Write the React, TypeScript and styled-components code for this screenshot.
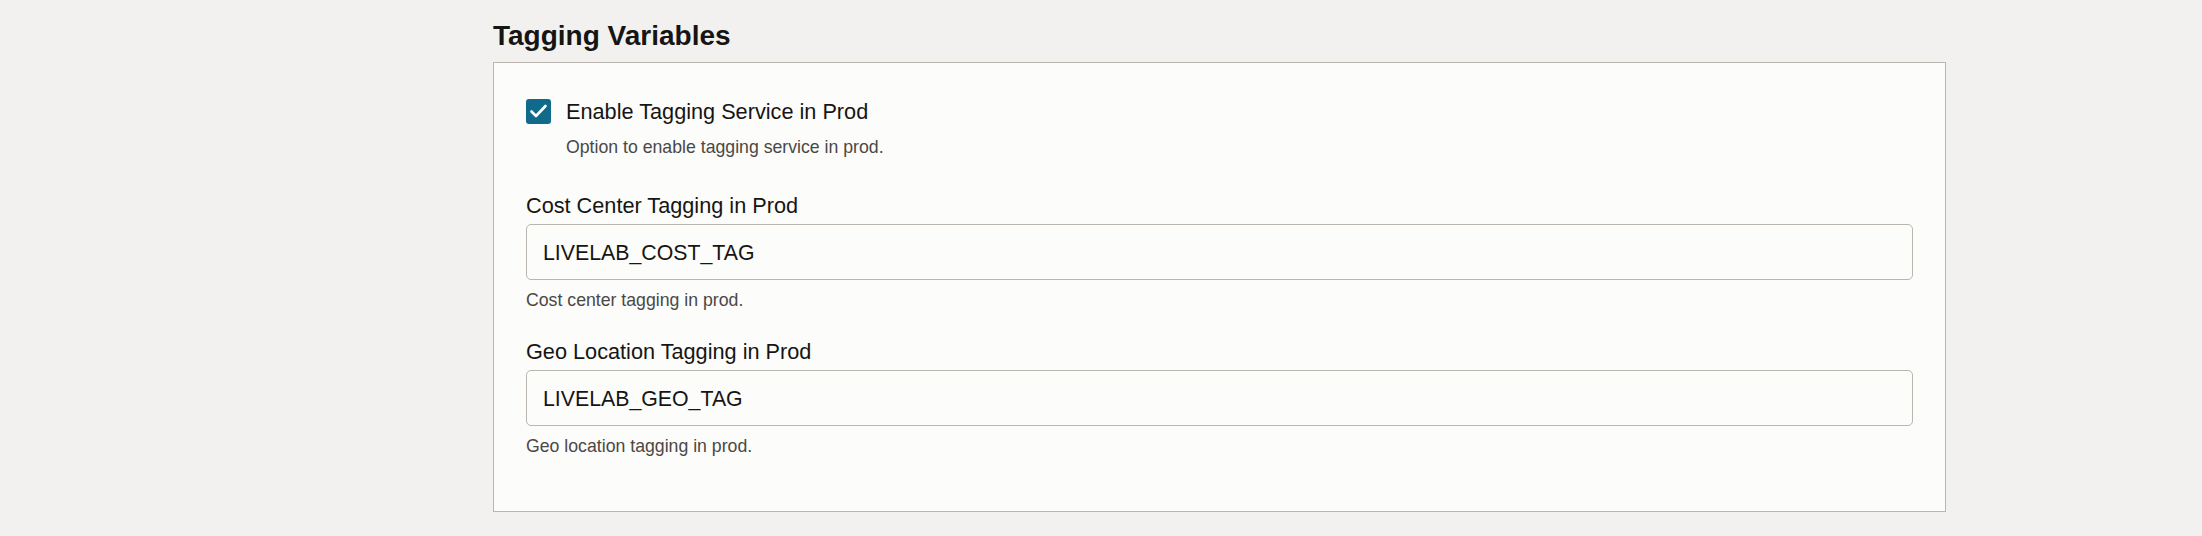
import React from "react";
import styled, { createGlobalStyle } from "styled-components";

const GlobalStyle = createGlobalStyle`
  html, body {
    margin: 0;
    padding: 0;
    background: #f2f1ef;
  }
  body {
    font-family: "Liberation Sans", Arial, sans-serif;
    color: #161513;
  }
`;

const Page = styled.div`
  padding: 19px 0 24px 493px;
  min-height: 536px;
  box-sizing: border-box;
`;

const Section = styled.section`
  width: 1453px;
`;

const Title = styled.h2`
  margin: 0 0 9px;
  font-size: 28px;
  line-height: 34px;
  font-weight: 700;
  color: #161513;
`;

const Panel = styled.div`
  box-sizing: border-box;
  border: 1px solid #bab5ae;
  background: #fcfcfb;
  padding: 36px 32px 54px;
  display: flex;
  flex-direction: column;
`;

const CheckRow = styled.div`
  display: flex;
  align-items: flex-start;
  gap: 15px;
`;

const CheckBox = styled.span`
  flex: none;
  width: 25px;
  height: 25px;
  border-radius: 3px;
  background: #0f6a8c;
  display: flex;
  align-items: center;
  justify-content: center;
`;

const CheckText = styled.div`
  display: flex;
  flex-direction: column;
`;

const Field = styled.div<{ $top: number }>`
  display: flex;
  flex-direction: column;
  margin-top: ${(p) => p.$top}px;
`;

const Label = styled.label`
  font-size: 21.7px;
  line-height: 26px;
  color: #161513;
`;

const Help = styled.div<{ $top: number }>`
  margin-top: ${(p) => p.$top}px;
  font-size: 17.7px;
  line-height: 22px;
  color: #4a4846;
`;

const TextInput = styled.input`
  margin-top: 5px;
  box-sizing: border-box;
  width: 100%;
  height: 56px;
  border: 1px solid #bab5ae;
  border-radius: 5px;
  background: #fcfcfb;
  padding: 3px 16px 0;
  font-family: "Liberation Sans", Arial, sans-serif;
  font-size: 21.3px;
  color: #161513;
  outline: none;
`;

const fields = [
  {
    label: "Cost Center Tagging in Prod",
    value: "LIVELAB_COST_TAG",
    help: "Cost center tagging in prod.",
    top: 35,
  },
  {
    label: "Geo Location Tagging in Prod",
    value: "LIVELAB_GEO_TAG",
    help: "Geo location tagging in prod.",
    top: 28,
  },
];

export default function App() {
  return (
    <>
      <GlobalStyle />
      <Page>
        <Section>
          <Title>Tagging Variables</Title>
          <Panel>
            <CheckRow>
              <CheckBox role="checkbox" aria-checked="true">
                <svg width="25" height="25" viewBox="0 0 25 25">
                  <path
                    d="M5.5 12.5 L10 17 L19.5 7"
                    fill="none"
                    stroke="#ffffff"
                    strokeWidth="2.6"
                    strokeLinecap="round"
                    strokeLinejoin="round"
                  />
                </svg>
              </CheckBox>
              <CheckText>
                <Label>Enable Tagging Service in Prod</Label>
                <Help $top={11}>Option to enable tagging service in prod.</Help>
              </CheckText>
            </CheckRow>
            {fields.map((f) => (
              <Field key={f.label} $top={f.top}>
                <Label>{f.label}</Label>
                <TextInput readOnly value={f.value} />
                <Help $top={9}>{f.help}</Help>
              </Field>
            ))}
          </Panel>
        </Section>
      </Page>
    </>
  );
}
